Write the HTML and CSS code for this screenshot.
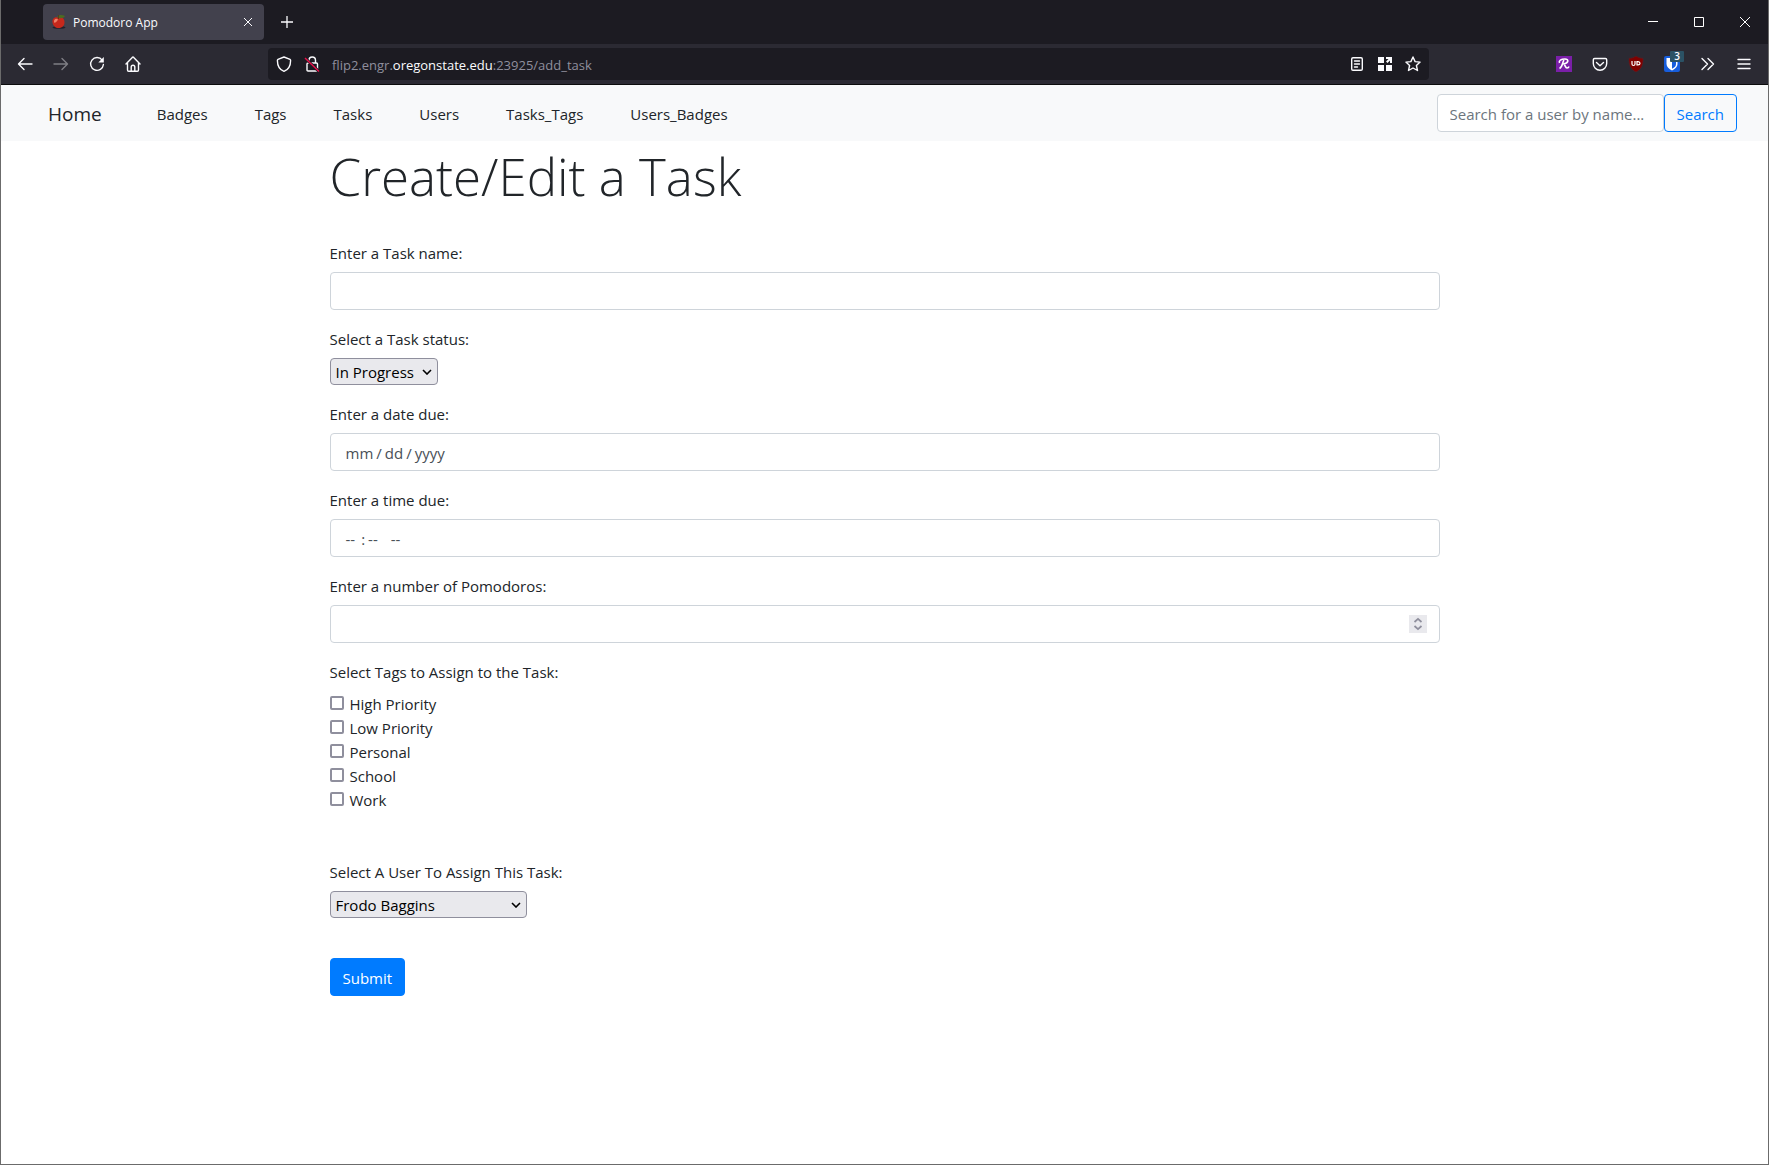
FILE: index.html
```html
<!DOCTYPE html>
<html lang="en">
<head>
<meta charset="utf-8">
<meta name="viewport" content="width=device-width, initial-scale=1">
<title>Pomodoro App</title>
<link rel="stylesheet" href="styles.css">
</head>
<body>
<div class="window">
  <header class="chrome">
    <div class="tabbar">
      <div class="tab">
        <svg class="favicon" width="16" height="16" viewBox="0 0 16 16"><ellipse cx="8" cy="13.500" rx="6.500" ry="1.300" fill="#24202a"/><path d="M8 4C4 2 1 4.500 1.500 8.500c.5 3.500 3 5.500 6 5.500 4 0 6-2.500 6-6C13.500 4.500 11 2.500 8 4z" fill="#c6281c"/><path d="M3 6.500C4 4.500 6 4.500 7 5.500 6 8 4 9 3 8.500z" fill="#ee8068"/><path d="M6 3c2-2.500 5-2.500 8-1-1 2-4 2.500-6 2z" fill="#4c6b22"/><path d="M7.500 5V1" stroke="#5a3c1c"/></svg>
        <span class="tab-title">Pomodoro App</span>
        <button class="icon-btn tab-close" type="button" aria-label="Close tab"><svg width="10" height="10" viewBox="0 0 10 10"><path d="M1 1l8 8M9 1L1 9" stroke="#fbfbfe" fill="none"/></svg></button>
      </div>
      <button class="icon-btn new-tab" type="button" aria-label="New tab"><svg width="12" height="12" viewBox="0 0 12 12"><path d="M6 0v12M0 6h12" stroke="#fbfbfe" stroke-width="1.300"/></svg></button>
      <div class="window-buttons">
        <button class="icon-btn" type="button" aria-label="Minimize"><svg width="10" height="10" viewBox="0 0 10 10"><path d="M0 4.500h10" stroke="#fff"/></svg></button>
        <button class="icon-btn" type="button" aria-label="Maximize"><svg width="10" height="10" viewBox="0 0 10 10"><path d="M.5.5h9v9h-9z" stroke="#fff" fill="none"/></svg></button>
        <button class="icon-btn" type="button" aria-label="Close"><svg width="10" height="10" viewBox="0 0 10 10"><path d="M0 0l10 10M10 0L0 10" stroke="#fff"/></svg></button>
      </div>
    </div>
    <div class="toolbar">
      <div class="nav-buttons">
        <button class="icon-btn" type="button" aria-label="Back"><svg width="16" height="16" viewBox="0 0 16 16"><path d="M15 8H2M7 2.500L1.500 8 7 13.500" class="line"/></svg></button>
        <button class="icon-btn dim" type="button" aria-label="Forward"><svg width="16" height="16" viewBox="0 0 16 16"><path d="M1 8h13M9 2.500L14.500 8 9 13.500" class="line"/></svg></button>
        <button class="icon-btn" type="button" aria-label="Reload"><svg width="16" height="16" viewBox="0 0 16 16"><path d="M13.200 4.200A6.400 6.400 0 1 0 14.400 8.500" class="line"/><path d="M14.800 1v5.500H9.300z" fill="#fbfbfe"/></svg></button>
        <button class="icon-btn" type="button" aria-label="Home"><svg width="16" height="16" viewBox="0 0 16 16"><path d="M1 8l6.300-6.600q.7-.6 1.400 0L15 8M2.500 7v7q0 1.200 1.200 1.200h8.600q1.200 0 1.200-1.200V7M6.200 15v-4q0-1.800 1.800-1.800t1.800 1.800v4" class="line"/></svg></button>
      </div>
      <div class="urlbar">
        <svg width="16" height="16" viewBox="0 0 16 16"><path d="M8 1l6 2.400q.6.300.6 1C14.600 9 12.600 13.500 8 15.300 3.400 13.500 1.400 9 1.400 4.400q0-.7.6-1z" class="line"/></svg>
        <svg width="16" height="16" viewBox="0 0 16 16"><path d="M5 7V4.500C5 2.500 6.200 1 8.200 1s3.300 1.500 3.300 3.500V7M3 8q0-1 1-1h8.500q1 0 1 1v6q0 1-1 1H4q-1 0-1-1z" class="line"/><path d="M1 2l14 13.500" stroke="#1c1b22" stroke-width="3"/><path d="M1 2l14 13.500" stroke="#e8104a" stroke-width="1.400"/></svg>
        <span class="url">flip2.engr.<b>oregonstate.edu</b>:23925/add_task</span>
        <svg width="16" height="16" viewBox="0 0 16 16"><path d="M4 1.700h8q1.300 0 1.300 1.300v10q0 1.300-1.300 1.300H4q-1.300 0-1.300-1.300V3Q2.700 1.700 4 1.700zM5.500 5h5M5.500 8h5M5.500 11h3" class="line"/></svg>
        <svg width="16" height="16" viewBox="0 0 16 16"><path d="M1 1h6v6H1zM1 9h6v6H1zM9 9h6v6H9z" fill="#fbfbfe"/><path d="M9 1h6v6h-2V4.500L10.500 7 9 5.500 11.500 3H9z" fill="#fbfbfe"/></svg>
        <svg width="16" height="16" viewBox="0 0 16 16"><path d="M8 1l2.100 4.600 5 .5-3.700 3.400 1.100 5L8 12l-4.500 2.500 1.100-5L.9 6.100l5-.5z" class="line"/></svg>
      </div>
      <div class="extensions">
        <svg width="16" height="16" viewBox="0 0 16 16"><rect width="16" height="16" fill="#7a1fa8"/><path d="M3.500 7C2.500 4.500 5 3 9 3s4 4-1.500 5M8 4C6.500 6 6.500 11 3.500 12.500M7.500 8c2 .5 1.500 4 3.500 4q1.500 0 2-1.500" stroke="#fff" stroke-width="1.600" fill="none"/></svg>
        <svg width="16" height="16" viewBox="0 0 16 16"><path d="M2.600 2.500h10.800q1.300 0 1.300 1.300V7.500a6.700 6.700 0 0 1-13.400 0V3.800q0-1.300 1.300-1.300zM4.500 6.500L8 9.700l3.500-3.200" class="line"/></svg>
        <svg width="16" height="16" viewBox="0 0 16 16"><path d="M8 0c2 1.500 4.500 2.300 7 2.300C15.300 9 13.500 13.300 8 16 2.500 13.300.7 9 1 2.300 3.500 2.300 6 1.500 8 0z" fill="#800000" stroke="#5a2026" stroke-width=".6"/><path d="M4 5v3q0 1.500 1.500 1.500T7 8V5M9 5.600v3.300h1q2 0 2-1.600t-2-1.700z" stroke="#fff" stroke-width="1.200" fill="none"/></svg>
        <span class="badged">
          <svg width="16" height="16" viewBox="0 0 16 16"><rect width="16" height="16" rx="2" fill="#175ddc"/><path d="M2.500 2h11v6c0 3-2.500 5-5.500 6.500C5 13 2.500 11 2.500 8z" fill="#fff"/><path d="M8 3.500h4V8c0 2-1.500 3.500-4 4.700z" fill="#175ddc"/></svg>
          <span class="badge">3</span>
        </span>
        <button class="icon-btn" type="button" aria-label="More tools"><svg width="16" height="16" viewBox="0 0 16 16"><path d="M2 2.500L7.500 8 2 13.500M8 2.500L13.500 8 8 13.500" class="line"/></svg></button>
        <button class="icon-btn" type="button" aria-label="Menu"><svg width="16" height="16" viewBox="0 0 16 16"><path d="M2 3.500h12M2 8h12M2 12.500h12" class="line"/></svg></button>
      </div>
    </div>
  </header>

  <nav class="navbar">
    <a class="brand" href="#">Home</a>
    <a href="#">Badges</a>
    <a href="#">Tags</a>
    <a href="#">Tasks</a>
    <a href="#">Users</a>
    <a href="#">Tasks_Tags</a>
    <a href="#">Users_Badges</a>
    <form class="search">
      <input class="control" type="text" placeholder="Search for a user by name..." aria-label="Search for a user by name">
      <button class="btn btn-outline" type="button">Search</button>
    </form>
  </nav>

  <main class="container">
    <h1>Create/Edit a Task</h1>
    <form>
      <div class="group">
        <label for="name">Enter a Task name:</label>
        <input class="control" id="name" type="text">
      </div>
      <div class="group">
        <label for="status">Select a Task status:</label>
        <select class="select select-status" id="status"><option>In Progress</option><option>Completed</option></select>
      </div>
      <div class="group">
        <label for="date">Enter a date due:</label>
        <input class="control" id="date" type="date">
      </div>
      <div class="group">
        <label for="time">Enter a time due:</label>
        <input class="control" id="time" type="time">
      </div>
      <div class="group">
        <label for="count">Enter a number of Pomodoros:</label>
        <div class="number">
          <input class="control" id="count" type="number">
          <svg class="spinner" width="18" height="18" viewBox="0 0 18 18"><rect width="18" height="18" fill="#e9e9ed"/><path d="M5.500 7L9 3.800 12.500 7M5.500 11L9 14.200 12.500 11" stroke="#8f8f9d" stroke-width="1.700" fill="none"/></svg>
        </div>
      </div>
      <fieldset class="tags">
        <legend>Select Tags to Assign to the Task:</legend>
        <label class="check"><input type="checkbox">High Priority</label>
        <label class="check"><input type="checkbox">Low Priority</label>
        <label class="check"><input type="checkbox">Personal</label>
        <label class="check"><input type="checkbox">School</label>
        <label class="check"><input type="checkbox">Work</label>
      </fieldset>
      <div class="group user-group">
        <label for="user">Select A User To Assign This Task:</label>
        <select class="select select-user" id="user"><option>Frodo Baggins</option></select>
      </div>
      <button class="btn btn-primary" type="button">Submit</button>
    </form>
  </main>
</div>
</body>
</html>
```

FILE: styles.css
```css
*, *::before, *::after { box-sizing: border-box; }

body {
  margin: 0;
  background: #fff;
  color: #212529;
  font: 15px/24px "Open Sans", "Noto Sans", sans-serif;
}

svg { display: block; flex: none; }
a { color: inherit; text-decoration: none; }

.window {
  min-height: 100vh;
  border: 1px solid #6b6b6b;
  border-top: 0;
}

/* Browser chrome */
.chrome { color: #fbfbfe; border-bottom: 1px solid #0c0c0d; }
.line { fill: none; stroke: #fbfbfe; stroke-width: 1.4px; stroke-linecap: round; stroke-linejoin: round; }
.icon-btn { display: flex; padding: 0; border: 0; background: none; }
.dim { opacity: 0.4; }

.tabbar {
  display: flex;
  align-items: center;
  height: 44px;
  padding: 0 18px 0 42px;
  background: #1c1b22;
}
.tab {
  display: flex;
  align-items: center;
  gap: 6px;
  width: 221px;
  height: 36px;
  padding: 0 11px 0 8px;
  border-radius: 4px;
  background: #42414d;
  font-size: 12px;
}
.tab-title { padding-top: 2px; }
.tab-close { margin-left: auto; }
.new-tab { margin-left: 17px; }
.window-buttons { display: flex; gap: 36px; margin-left: auto; }

.toolbar {
  display: flex;
  align-items: center;
  height: 40px;
  padding: 0 16px;
  background: #2b2a33;
}
.nav-buttons { display: flex; gap: 20px; width: 251px; }
.urlbar {
  display: flex;
  flex: 1;
  align-items: center;
  gap: 12px;
  height: 32px;
  padding: 0 8px;
  border-radius: 4px;
  background: #1c1b22;
}
.url { flex: 1; padding-top: 2px; color: #8f8f9d; font-size: 13px; }
.url b { color: #fbfbfe; font-weight: 400; }
.extensions { display: flex; gap: 20px; margin-left: 127px; }
.badged { position: relative; }
.badge {
  position: absolute;
  top: -5px;
  left: 6px;
  width: 14px;
  height: 11px;
  border-radius: 1px;
  background: #2b5265;
  font-size: 10px;
  font-weight: 600;
  line-height: 11px;
  text-align: center;
}

/* Site navigation */
.navbar {
  display: flex;
  align-items: center;
  gap: 47px;
  height: 56px;
  padding: 0 31px 0 47px;
  background: #f8f9fa;
}
.navbar a { padding-top: 2px; }
.navbar .brand { margin-right: 8px; font-size: 19px; }
.search { display: flex; margin-left: auto; }
.search .control { width: 227px; }

/* Form controls */
.control {
  display: block;
  width: 100%;
  height: 38px;
  padding: 7px 12px 5px;
  border: 1px solid #ced4da;
  border-radius: 4px;
  background: #fff;
  color: #495057;
  font: inherit;
}
.control::placeholder { color: #6c757d; }
.control::-webkit-calendar-picker-indicator { display: none; }
.control::-webkit-inner-spin-button { appearance: none; margin: 0; }
.control::-webkit-datetime-edit { padding: 0 2px; }
.control::-webkit-datetime-edit-text { padding: 0 2px; }
.control::-webkit-datetime-edit-hour-field { padding-right: 4px; }
.control::-webkit-datetime-edit-minute-field { padding-right: 6px; }

.btn {
  height: 38px;
  padding: 7px 12px 5px;
  border: 1px solid #007bff;
  border-radius: 4px;
  font: inherit;
}
.btn-outline { background: transparent; color: #007bff; }
.btn-primary { background: #007bff; color: #fff; }

.select {
  display: block;
  height: 27px;
  padding: 0 20px 0 5px;
  border: 1px solid #8f8f9d;
  border-radius: 4px;
  appearance: none;
  background: #e9e9ed url("data:image/svg+xml,%3Csvg xmlns='http://www.w3.org/2000/svg' width='10' height='6'%3E%3Cpath d='M1 1l4 4 4-4' fill='none' stroke='black' stroke-width='1.6'/%3E%3C/svg%3E") no-repeat right 5px center;
  color: #000;
  font: inherit;
}
.select-status { width: 108px; }
.select-user { width: 197px; }

.number { position: relative; }
.spinner { position: absolute; top: 10px; right: 13px; pointer-events: none; }

/* Page */
.container { max-width: 1140px; margin: 0 auto; padding: 0 15px; }
h1 { margin: 0 0 28px; font-size: 51px; font-weight: 300; line-height: 71px; }
.group { margin-bottom: 16px; }
.group > label { display: block; margin-bottom: 6px; line-height: 26px; }
.tags { margin: 0 0 47px; padding: 0; border: 0; }
.tags legend { margin-bottom: 7px; padding: 0; line-height: 26px; }
.check { display: flex; align-items: center; gap: 6px; }
.check input {
  width: 14px;
  height: 14px;
  margin: 0 0 3px;
  border: 2px solid #8f8f9d;
  border-radius: 2px;
  appearance: none;
  background: #fff;
}
.user-group { margin-bottom: 40px; }
```
